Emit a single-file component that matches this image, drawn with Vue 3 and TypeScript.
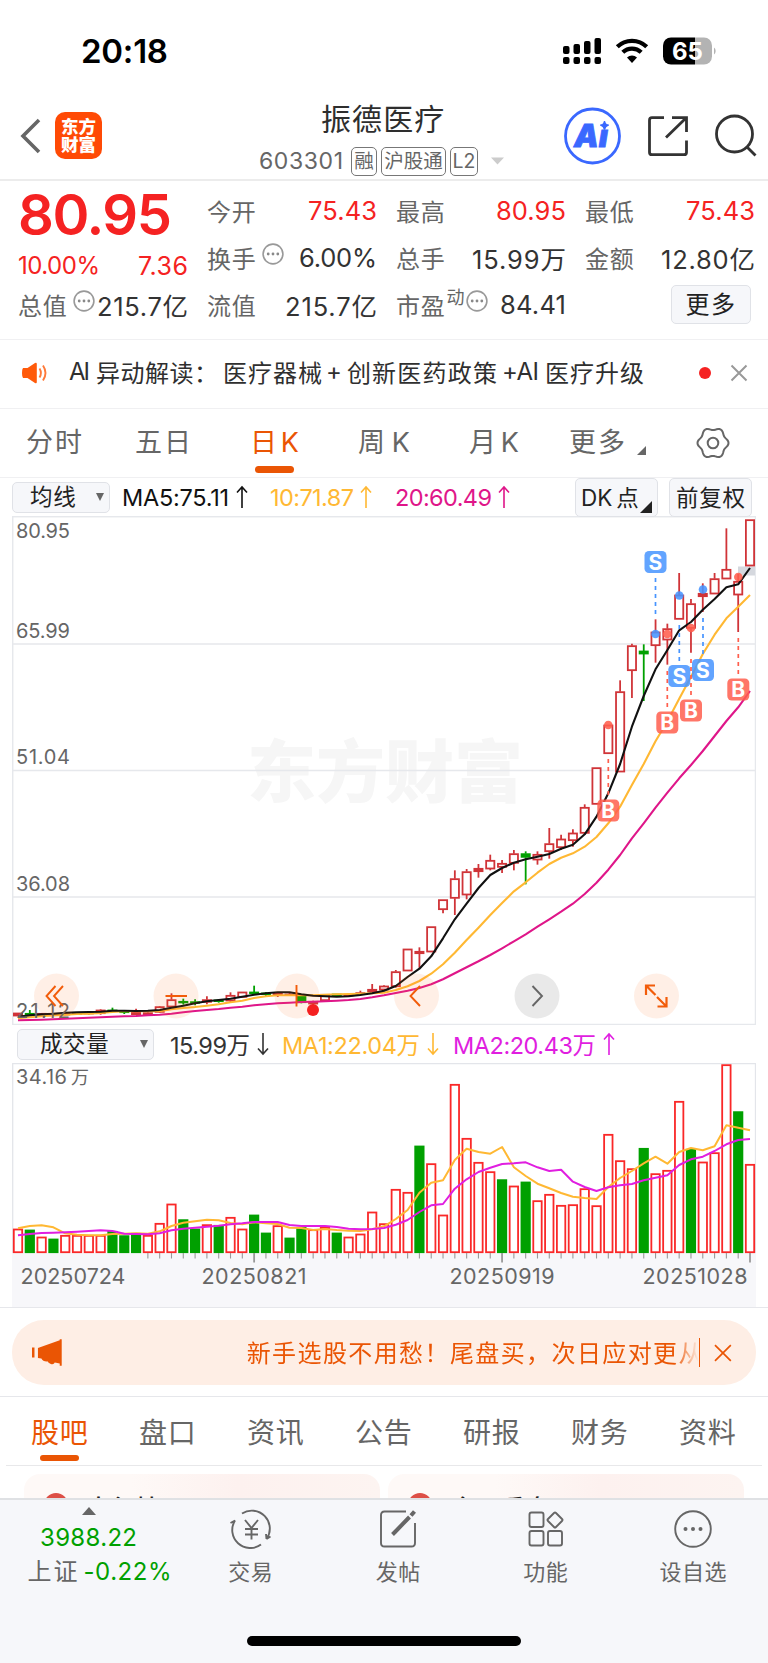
<script setup lang="ts">
import type { Directive } from 'vue'

/* Spreads a label over a given width by adjusting its letter spacing. */
const vFit: Directive<HTMLElement, number> = {
  mounted(el, { value }) {
    const n = (el.textContent ?? '').trim().length
    const natural = el.getBoundingClientRect().width
    if (n > 1) {
      const gap = (value - natural) / (n - 1)
      el.style.letterSpacing = `${gap.toFixed(3)}px`
      el.style.marginRight = `${(-gap).toFixed(3)}px`
    }
  },
}

interface Quote { label: string; value: string; w: number; red?: boolean; dots?: boolean; sup?: string }
const quotes: Quote[][] = [
  [
    { label: '今开', value: '75.43', w: 69, red: true },
    { label: '换手', value: '6.00%', w: 78, dots: true },
    { label: '流值', value: '215.7亿', w: 92 },
  ],
  [
    { label: '最高', value: '80.95', w: 70, red: true },
    { label: '总手', value: '15.99万', w: 94 },
    { label: '市盈', value: '84.41', w: 66, sup: '动', dots: true },
  ],
  [
    { label: '最低', value: '75.43', w: 69, red: true },
    { label: '金额', value: '12.80亿', w: 94 },
  ],
]

const periods = [
  { t: '分时', w: 56, cell: 109 }, { t: '五日', w: 56, cell: 115 }, { t: '日K', w: 49, cell: 108 , on: true },
  { t: '周K', w: 52, cell: 111 }, { t: '月K', w: 50, cell: 100 },
]
const sections = ['股吧', '盘口', '资讯', '公告', '研报', '财务', '资料']
const tools = ['交易', '发帖', '功能', '设自选']

/* ---- chart geometry ---- */
const STEP = 732 / 62
const cx = (i: number) => 6 + i * STEP
const from = (base: number, list: number[]) => list.map((v) => (v + base) / 3)
const line = (ys: number[]) => ys.map((y, i) => `${cx(i).toFixed(1)},${y.toFixed(1)}`).join(' ')

type Raw = [up: 0 | 1, high: number, top: number, bottom: number, low: number]
const low: Raw[] = [
  [1, 519, 519, 528, 528], [0, 510, 520, 526, 526], [1, 520, 520, 526, 526], [1, 519, 520, 527, 527],
  [1, 518, 520, 525, 525], [1, 518, 519, 523, 523], [1, 515, 517, 521, 524], [1, 508, 510, 521, 524],
  [0, 503, 510, 514, 514], [0, 511, 513, 518, 522], [1, 506, 514, 524, 524], [1, 516, 518, 524, 527],
  [1, 498, 500, 517, 519], [1, 460, 479, 501, 503], [0, 476, 484, 488, 494], [0, 478, 485, 489, 496],
  [1, 469, 479, 487, 493], [0, 478, 480, 484, 488], [1, 457, 466, 483, 486], [1, 456, 456, 472, 472],
  [0, 437, 456, 460, 461], [0, 457, 459, 463, 469], [1, 459, 460, 466, 471], [1, 459, 462, 466, 468],
  [0, 464, 466, 488, 490], [1, 482, 484, 492, 494], [1, 463, 463, 482, 482], [0, 461, 462, 466, 469],
  [1, 460, 463, 467, 469], [1, 452, 458, 463, 465], [1, 432, 448, 456, 460], [1, 436, 438, 450, 452],
]
const mid: Raw[] = [
  [1, 690, 695, 740, 743], [1, 627, 627, 693, 693], [1, 622, 634, 641, 683], [1, 560, 560, 636, 636],
  [1, 479, 479, 509, 520], [1, 391, 416, 475, 525], [1, 387, 395, 465, 478], [1, 372, 385, 395, 413],
  [1, 344, 361, 387, 391], [1, 360, 370, 382, 399], [1, 330, 341, 370, 391], [0, 334, 341, 352, 433],
  [1, 334, 343, 360, 374], [1, 264, 311, 335, 356], [1, 284, 297, 323, 330], [1, 268, 279, 302, 320],
  [1, 193, 202, 280, 284], [1, 83, 83, 193, 193],
]
const high: Raw[] = [
  [1, 645, 645, 731, 731], [1, 511, 545, 786, 786], [1, 401, 407, 482, 564], [0, 403, 423, 432, 573],
  [1, 328, 366, 407, 458], [1, 341, 356, 390, 464], [1, 189, 255, 328, 328], [1, 267, 281, 355, 428],
  [1, 220, 250, 260, 306], [1, 189, 206, 252, 252], [1, 55, 178, 207, 207], [1, 192, 214, 255, 366],
  [1, 29, 29, 168, 168],
]
const place = (base: number, rows: Raw[]) =>
  rows.map(([up, ...v]) => {
    const [h, t, b, l] = from(base, v)
    return { up: up === 1, h, t, b, l }
  })
const candles = [...place(972, low), ...place(672, mid), ...place(-18, high)]

const ma5 = line([
  ...from(972, [530, 526, 523, 521, 518, 517, 516, 515, 512, 512, 513, 512, 510, 503, 497, 490, 484, 480, 476, 470, 464, 460, 457, 457, 463, 467, 469, 470, 469, 465, 460]),
  ...from(672, [752, 738, 711, 686, 649, 595, 538, 491, 444, 405, 384, 368, 358, 350, 342, 326, 314, 283, 230]),
  ...from(-18, [850, 762, 650, 558, 478, 420, 361, 336, 299, 267, 232, 223, 174]),
])
const ma10 = line([
  ...from(972, [535, 532, 529, 526, 524, 522, 521, 519, 516, 514, 514, 514, 514, 508, 504, 501, 497, 493, 487, 482, 474, 469, 466, 466, 466, 466, 464, 463, 462, 461, 460]),
  ...from(672, [758, 750, 739, 723, 701, 673, 638, 600, 563, 525, 489, 454, 427, 398, 372, 353, 340, 320, 291]),
  ...from(-18, [940, 890, 825, 762, 694, 634, 566, 500, 432, 374, 325, 290, 255]),
])
const ma20 = line([
  ...from(972, [541, 540, 539, 538, 536, 535, 533, 532, 530, 529, 528, 526, 524, 521, 517, 513, 510, 507, 503, 500, 496, 493, 490, 488, 486, 485, 484, 482, 480, 477, 472]),
  ...from(672, [766, 759, 752, 744, 733, 718, 700, 682, 664, 645, 625, 604, 583, 560, 538, 515, 491, 462, 428, 389, 345, 295, 250, 203, 158, 115, 75]),
  ...from(-18, [723, 678, 633, 592, 543]),
])

interface Mark { k: 'S' | 'B'; x: number; y: number; d1: number; d2: number; dot: number }
const marks: Mark[] = [
  { k: 'S', x: 643.5, y: 46, d1: 62, d2: 98, dot: 118 },
  { k: 'S', x: 667.3, y: 160, d1: 109, d2: 145, dot: 79.5 },
  { k: 'S', x: 691, y: 154, d1: 102, d2: 138, dot: 73.5 },
  { k: 'B', x: 655.3, y: 206.5, d1: 155, d2: 192, dot: 118 },
  { k: 'B', x: 679, y: 194.5, d1: 143, d2: 180, dot: 112 },
  { k: 'B', x: 726.3, y: 173.5, d1: 122, d2: 160, dot: 61 },
  { k: 'B', x: 596.3, y: 294.5, d1: 243, d2: 280, dot: 209 },
]

const volTop = from(-9, [
  507, 510, 531, 537, 526, 526, 526, 526, 514, 527, 520, 526, 490, 432, 479, 507, 494, 496, 472, 507, 465, 519, 497, 534, 502, 509,
  502, 519, 531, 522, 456, 491, 388, 397, 258, 311, 465, 73, 235, 307, 335, 359, 378, 366, 422, 403, 436, 434, 386, 437, 223, 302,
  326, 265, 341, 331, 124, 268, 306, 278, 14, 155, 313,
])
const falling = [1, 3, 8, 9, 10, 14, 15, 17, 20, 21, 23, 24, 27, 34, 41, 43, 53, 57, 61]
const volMa1 = line(from(-9, [
  505, 498, 496, 502, 520, 524, 526, 526, 522, 521, 520, 521, 514, 498, 488, 484, 479, 481, 489, 493, 487, 490, 492, 503, 504, 510,
  507, 510, 512, 513, 508, 499, 477, 450, 398, 368, 361, 300, 266, 276, 281, 261, 322, 348, 371, 385, 399, 410, 414, 417, 381, 354,
  333, 310, 290, 311, 276, 264, 271, 259, 196, 203, 211,
]))
const volMa2 = line(from(-9, [
  526, 522, 519, 518, 517, 515, 513, 511, 513, 521, 522, 523, 520, 511, 506, 503, 500, 497, 493, 490, 486, 486, 486, 495, 498, 498,
  498, 501, 506, 508, 507, 504, 494, 480, 456, 436, 432, 386, 358, 336, 323, 312, 310, 307, 322, 333, 329, 365, 381, 393, 382, 376,
  372, 361, 353, 346, 315, 298, 290, 273, 253, 240, 237,
]))
const ticks = Array.from({ length: 52 }, (_, i) => i + 11)
const dates = [
  { t: '20250724', x: 8.5 }, { t: '20250821', x: 189.5 }, { t: '20250919', x: 437.5 }, { t: '20251028', x: 630.5 },
]
const prices = [
  { t: '80.95', y: 22 }, { t: '65.99', y: 122 }, { t: '51.04', y: 248 }, { t: '36.08', y: 375 }, { t: '21.12', y: 501.5 },
]

const gear = Array.from({ length: 73 }, (_, i) => {
  const a = (i * Math.PI) / 36
  const r = 14.2 + 1.3 * Math.cos(6 * a)
  return `${(17 + r * Math.cos(a)).toFixed(2)},${(17 + r * Math.sin(a)).toFixed(2)}`
}).join(' ')
</script>

<template>
  <main class="phone">
    <header class="status">
      <b v-fit="87" class="clock">20:18</b>
      <svg class="status-icons" width="160" height="32" viewBox="0 0 160 32">
        <g>
          <rect x="2" y="10" width="6.5" height="8" rx="2" /><rect x="12.5" y="8" width="6.5" height="10" rx="2" />
          <rect x="23" y="5" width="6.5" height="13" rx="2" /><rect x="33.5" y="2" width="6.5" height="16" rx="2" />
          <rect x="2" y="21" width="6.5" height="7" rx="2" /><rect x="12.5" y="21" width="6.5" height="7" rx="2" />
          <rect x="23" y="21" width="6.5" height="7" rx="2" /><rect x="33.5" y="21" width="6.5" height="7" rx="2" />
        </g>
        <g fill="none" stroke="#000" stroke-width="4.2">
          <path d="M56.3 10.8a21 21 0 0 1 29.4 0" /><path d="M61.8 16.3a13.3 13.3 0 0 1 18.4 0" />
        </g>
        <path d="M66 21.6a7.2 7.2 0 0 1 10 0L71 27z" />
        <path d="M110 1.5h24v27h-24a8 8 0 0 1-8-8v-11a8 8 0 0 1 8-8z" />
        <path d="M134 1.5h9a8 8 0 0 1 8 8v11a8 8 0 0 1-8 8h-9z" fill="#b3b3b3" />
        <path d="M153 11.5a4.5 4.5 0 0 1 0 7z" fill="#b3b3b3" />
        <text x="126.500" y="23.800" class="batt">65</text>
      </svg>
    </header>

    <nav class="head">
      <svg class="back" width="24" height="38" viewBox="0 0 24 38"><path d="M21 3 5 19l16 16" /></svg>
      <div class="logo"><span>东方</span><span>财富</span></div>
      <div class="title">
        <h1>振德医疗</h1>
        <div class="code">
          <span v-fit="84" class="num">603301</span>
          <i class="tag t1">融</i><i class="tag t2">沪股通</i><i class="tag t3">L2</i>
          <svg width="14" height="8" viewBox="0 0 14 8"><path d="M0 .5h13L6.500 7.500z" fill="#ccc" /></svg>
        </div>
      </div>
      <svg class="head-icons" width="200" height="60" viewBox="0 0 200 60">
        <circle cx="29.500" cy="30" r="27" fill="none" stroke="#3a68ff" stroke-width="2.800" />
        <text x="11" y="40.500" class="ai">Aı</text>
        <path d="M41.500 15q.8 4 4.300 4-3.500 1-4.300 4.500-.8-3.500-4.300-4.500 3.500 0 4.300-4z" fill="#3a68ff" stroke="#3a68ff" stroke-width="1.200" />
        <g fill="none" stroke="#333" stroke-width="2.800">
          <path d="M101 11.700H89q-2.500 0-2.500 2.500v32q0 2.500 2.500 2.500h32q2.500 0 2.500-2.500V34.500M109 11.700h14.500V26M122.500 12.500 103 31.500" />
          <circle cx="171.500" cy="28" r="18" /><path d="m183.500 40.500 9 9" />
        </g>
      </svg>
    </nav>

    <section class="quote">
      <div class="main">
        <b v-fit="154" class="price">80.95</b>
        <p class="pct"><span v-fit="82">10.00%</span><span v-fit="50" class="chg">7.36</span></p>
        <p class="cell"><span class="lab">总值</span><svg class="dots" width="22" height="22"><use href="#dots" /></svg><span v-fit="91" class="val">215.7亿</span></p>
      </div>
      <div v-for="(col, c) in quotes" :key="c" class="col">
        <p v-for="q in col" :key="q.label" class="cell">
          <span class="lab">{{ q.label }}</span>
          <sup v-if="q.sup">{{ q.sup }}</sup>
          <svg v-if="q.dots" class="dots" :class="{ tight: q.sup }" width="22" height="22"><use href="#dots" /></svg>
          <span v-fit="q.w" class="val" :class="{ red: q.red }">{{ q.value }}</span>
        </p>
        <button v-if="c === 2" class="more">更多</button>
      </div>
      <svg width="0" height="0" class="defs">
        <symbol id="dots" viewBox="0 0 22 22">
          <circle cx="11" cy="11" r="9.900" fill="none" stroke="#999" stroke-width="1.600" />
          <circle cx="6.200" cy="11" r="1.400" fill="#888" /><circle cx="11" cy="11" r="1.400" fill="#888" /><circle cx="15.800" cy="11" r="1.400" fill="#888" />
        </symbol>
      </svg>
    </section>

    <section class="notice">
      <svg width="26" height="22" viewBox="0 0 26 22">
        <path d="M1 6h4.500L13 1q1.800-.8 1.800 1v18q0 1.800-1.800 1L5.500 16H1q-1-1-1-5t1-5z" fill="#ff5a0a" />
        <g fill="none" stroke="#ff7a3a" stroke-width="1.900"><path d="M17.500 6.500q2.800 4.500 0 9" /><path d="M21 3.500q5 7.500 0 15" /></g>
      </svg>
      <p><span v-fit="21">AI</span><span v-fit="122" class="n1">异动解读：</span><span v-fit="99" class="n2">医疗器械</span><span class="n3">+</span><span v-fit="150" class="n4">创新医药政策</span><span v-fit="37" class="n5">+AI</span><span v-fit="99" class="n6">医疗升级</span></p>
      <i class="red-dot"></i>
      <svg width="18" height="18" viewBox="0 0 18 18"><path d="m1.500 1.500 15 15m0-15-15 15" stroke="#999" stroke-width="2" /></svg>
    </section>

    <nav class="periods">
      <span v-for="p in periods" :key="p.t" class="period" :class="{ on: p.on }" :style="{ width: p.cell + 'px' }"><span v-fit="p.w">{{ p.t }}</span></span>
      <span class="period last"><span v-fit="56">更多</span><svg width="9" height="10"><path d="M9 0v9H0z" fill="#666" /></svg></span>
      <svg width="34" height="34" viewBox="0 0 34 34"><polygon :points="gear" fill="none" stroke="#666" stroke-width="2" /><circle cx="17" cy="17" r="5.300" fill="none" stroke="#666" stroke-width="2" /></svg>
    </nav>

    <div class="legend">
      <button class="sel ma-sel">均线<i class="caret"></i></button>
      <span v-fit="107" class="m1">MA5:75.11</span><svg class="arr a1"><use href="#up" /></svg>
      <span v-fit="84" class="m2">10:71.87</span><svg class="arr a2"><use href="#up" /></svg>
      <span v-fit="97" class="m3">20:60.49</span><svg class="arr a3"><use href="#up" /></svg>
      <button class="sel dk">DK<span>点</span><svg width="12" height="12"><path d="M12 0v12H0z" fill="#222" /></svg></button>
      <button class="sel fq">前复权</button>
      <svg width="0" height="0" class="defs">
        <symbol id="up" viewBox="0 0 12 24"><path d="M6 23V2M1 7.500 6 2l5 5.500" fill="none" stroke="currentColor" stroke-width="1.600" /></symbol>
        <symbol id="down" viewBox="0 0 12 24"><path d="M6 1v21M1 16.500 6 22l5-5.500" fill="none" stroke="currentColor" stroke-width="1.600" /></symbol>
      </svg>
    </div>

    <svg class="kline" width="744" height="509" viewBox="0 0 744 509">
      <text x="235" y="280.500" class="wm" textLength="276" lengthAdjust="spacingAndGlyphs">东方财富</text>
      <g stroke="#e6e8ec" stroke-width="1.500" fill="none">
        <rect x=".7" y=".7" width="742.800" height="507.800" /><path d="M0 128h744M0 254.500h744M0 381h744" />
      </g>
      <rect x="726" y="50.500" width="17" height="9" fill="#d5d8de" />
      <g v-for="(k, i) in candles" :key="i" :stroke="k.up ? '#d03438' : '#00a000'" :fill="k.up ? (k.b - k.t > 3.5 ? '#fff' : '#d03438') : '#00a000'" stroke-width="1.800">
        <path v-if="k.t - k.h > 0.4" :d="`M${cx(i)} ${k.h}V${k.t}`" />
        <path v-if="k.l - k.b > 0.4" :d="`M${cx(i)} ${k.b}V${k.l}`" />
        <rect :x="cx(i) - 4.100" :y="k.t + 0.500" width="8.200" :height="Math.max(k.b - k.t - 1, 0.600)" />
      </g>
      <g fill="none" stroke-width="2.100" stroke-linejoin="round">
        <polyline :points="ma20" stroke="#df1689" /><polyline :points="ma10" stroke="#ffb833" /><polyline :points="ma5" stroke="#111" />
      </g>
      <g v-for="(m, i) in marks" :key="'m' + i" :fill="m.k === 'S' ? '#4794ff' : '#ff5e4d'">
        <circle :cx="m.x" :cy="m.dot" r="4.300" opacity=".88" />
        <path :d="`M${m.x} ${m.d1}V${m.d2}`" :stroke="m.k === 'S' ? '#4794ff' : '#ff5e4d'" stroke-width="1.700" stroke-dasharray="4 4" />
        <rect :x="m.x - 11" :y="m.y - 11" width="22" height="22" rx="4.500" opacity=".85" />
        <text :x="m.x" :y="m.y + 7.700" class="mark">{{ m.k }}</text>
      </g>
      <g class="axis"><text v-for="p in prices" :key="p.t" x="4" :y="p.y" textLength="54">{{ p.t }}</text></g>
      <g fill="#ff6a1f" fill-opacity=".11">
        <circle cx="44.500" cy="480" r="22.500" /><circle cx="164" cy="480" r="22.500" /><circle cx="285" cy="480" r="22.500" />
        <circle cx="404.500" cy="480" r="22.500" /><circle cx="644.500" cy="480" r="22.500" />
      </g>
      <circle cx="525" cy="480" r="22.500" fill="#000" fill-opacity=".085" />
      <g fill="none" stroke="#f25c0a" stroke-width="1.900">
        <path d="m43.500 470-9 10 9 10M51 470l-9 10 9 10M153.500 480H175M284.500 469v21.500M408 470l-9.500 10 9.500 10" />
        <path d="M643 469.500h-9v9.500M634.500 470l9 9M645.500 490.500h9v-9.500M654 490l-9-9" stroke-width="2.200" />
      </g>
      <path d="m520.500 470 9.500 10-9.500 10" fill="none" stroke="#666" stroke-width="1.900" />
      <circle cx="301" cy="494" r="6" fill="#f42020" />
    </svg>

    <div class="legend vol-legend">
      <button class="sel vol-sel">成交量<i class="caret"></i></button>
      <span v-fit="80" class="v1">15.99万</span><svg class="arr"><use href="#down" /></svg>
      <span v-fit="138" class="v2">MA1:22.04万</span><svg class="arr"><use href="#down" /></svg>
      <span v-fit="143" class="v3">MA2:20.43万</span><svg class="arr"><use href="#up" /></svg>
    </div>

    <svg class="vol" width="744" height="244" viewBox="0 0 744 244">
      <rect x="0" y="190" width="744" height="54" fill="#f7f7fa" />
      <path d="M.7 190V.7h742.800V190" fill="none" stroke="#e3e5ea" stroke-width="1.300" />
      <g class="axis"><text x="4" y="20.500" textLength="51">34.16</text><text x="59" y="20.500" class="cjk">万</text></g>
      <g v-for="(t, i) in volTop" :key="i" :fill="falling.includes(i) ? '#00a000' : '#fff'" :stroke="falling.includes(i) ? '#00a000' : '#fa2828'" stroke-width="1.800">
        <rect :x="cx(i) - 4.200" :y="t + 0.500" width="8.400" :height="188.700 - t" />
      </g>
      <g fill="none" stroke-width="2" stroke-linejoin="round"><polyline :points="volMa1" stroke="#ffb833" /><polyline :points="volMa2" stroke="#e01ee0" /></g>
      <path v-for="i in ticks" :key="'t' + i" :d="`M${cx(i)} 190v${(i - 20) % 21 ? 5.500 : 9.500}`" stroke="#999" :stroke-width="(i - 20) % 21 ? 1.1 : 1.800" />
      <g class="axis date"><text v-for="d in dates" :key="d.t" :x="d.x" y="221" textLength="105">{{ d.t }}</text></g>
    </svg>

    <section class="promo">
      <div class="pill">
        <svg class="horn" width="32" height="28" viewBox="0 0 32 28"><path d="M0 8.500h2.500v10H0zM6 9 28 1V0h2v27h-2v-2.500l-5-1q-1 2.500-4 1.500t-3-2.500q-5 .5-6.500-3L6 19z" fill="#ea5504" /></svg>
        <p class="tip"><span>新手选股不用愁！尾盘买，次日应对更从容</span></p>
        <i class="bar"></i>
        <svg width="18" height="18" viewBox="0 0 18 18"><path d="m1 1 16 16M17 1 1 17" stroke="#ea5504" stroke-width="1.700" /></svg>
      </div>
    </section>

    <nav class="sections"><span v-for="(s, i) in sections" :key="s" :class="{ on: i === 0 }">{{ s }}</span></nav>

    <section class="cards">
      <article><i></i><b>大行情</b></article>
      <article class="second"><i></i><b>今日看盘</b></article>
    </section>

    <footer class="dock">
      <div class="index">
        <svg width="14" height="8" viewBox="0 0 14 8"><path d="M0 8 7 0l7 8z" fill="#666" /></svg>
        <strong v-fit="97">3988.22</strong>
        <p><span v-fit="50">上证</span><em v-fit="88">-0.22%</em></p>
      </div>
      <div v-for="(t, i) in tools" :key="t" class="tool">
        <svg width="44" height="40" viewBox="0 0 44 40" fill="none" stroke="#666" stroke-width="1.900">
          <template v-if="i === 0">
            <path d="M13 4.500a18 18 0 0 1 24.500 25.500l4-2.500M32 35.500A18 18 0 0 1 6 11.500l-4.500 2.500M37.500 30l-.5-5" />
            <path d="m16 11 6.500 8 6.500-8M16 20h13M16 25.500h13M22.500 19v11.500" />
          </template>
          <template v-else-if="i === 1">
            <path d="M30 2.500H8.500Q5 2.500 5 6v28q0 3.500 3.500 3.500h27Q39 37.500 39 34V14" />
            <path d="M38.500 2.500 35 6.500M33.500 8 19 23l-2.500 2.500" stroke-width="4" />
          </template>
          <template v-else-if="i === 2">
            <rect x="5.500" y="3.500" width="14" height="14.500" rx="2" /><rect x="5.500" y="22" width="14" height="14.500" rx="2" /><rect x="24" y="22" width="14" height="14.500" rx="2" />
            <path d="M30 4q1-1 2 0l6 6q1 1 0 2l-6 6q-1 1-2 0l-6-6q-1-1 0-2z" />
          </template>
          <template v-else>
            <circle cx="22" cy="20" r="17.800" />
            <g fill="#666" stroke="none"><circle cx="14.500" cy="20" r="2" /><circle cx="22" cy="20" r="2" /><circle cx="29.500" cy="20" r="2" /></g>
          </template>
        </svg>
        <span>{{ t }}</span>
      </div>
      <i class="home"></i>
    </footer>
  </main>
</template>

<style>
body { margin: 0; background: #fff; }
</style>

<style scoped>
.phone { width: 768px; height: 1663px; overflow: hidden; background: #fff; color: #333; font-family: Inter, "Noto Sans CJK SC", sans-serif; font-size: 24px; display: flex; flex-direction: column; }
.phone * { box-sizing: border-box; }
.phone > * { flex: none; }
p, h1 { margin: 0; font-weight: 400; }
i, em { font-style: normal; }
span, b, strong, em { white-space: nowrap; }
button { font: inherit; color: #222; padding: 0; background: #f6f7fa; border: 1.500px solid #e0e2e7; border-radius: 5px; }
.defs { position: absolute; }

.status { height: 100px; display: flex; justify-content: space-between; padding: 31px 47px 0 81px; }
.clock { font-size: 33px; line-height: 41px; font-weight: 600; color: #000; height: 41px; }
.status-icons { margin-top: 5px; }
.batt { font: 700 24px Inter; fill: #fff; text-anchor: middle; }

.head { height: 81px; border-bottom: 2px solid #ececec; display: flex; align-items: flex-start; }
.head > * { flex: none; }
.back { margin: 17px 0 0 18px; fill: none; stroke: #666; stroke-width: 3.600; }
.logo { width: 47px; height: 47px; margin: 12px 0 0 13px; border-radius: 10px; background: #ff4a05; color: #fff; font: 900 17.500px/18px "Noto Sans CJK SC"; display: flex; flex-direction: column; align-items: center; justify-content: center; padding-bottom: 1px; }
.title { width: 275px; margin-left: 157px; }
h1 { font-size: 30px; line-height: 38px; letter-spacing: 1.100px; margin-left: 62px; color: #2e2e2e; }
.code { display: flex; align-items: center; height: 34px; margin-top: 6px; color: #666; }
.num { font-size: 23px; }
.tag { border: 1.500px solid #777; border-radius: 5px; height: 29px; line-height: 26px; font-size: 19.500px; text-align: center; }
.t1 { width: 26px; margin-left: 8px; }
.t2 { width: 65px; margin-left: 4px; }
.t3 { width: 28px; margin: 0 13px 0 4px; }
.head-icons { margin: 6px 0 0 29px; }
.ai { font: italic 900 31px Inter; fill: #3a68ff; stroke: #3a68ff; stroke-width: .8px; }

.quote { height: 159px; border-bottom: 1.500px solid #f0f0f2; display: grid; grid-template-columns: repeat(4, 170px); column-gap: 19px; padding: 6px 0 0 18px; }
.main, .col { display: flex; flex-direction: column; position: relative; }
.price { font-size: 56px; line-height: 57px; height: 56px; font-weight: 600; color: #f52222; align-self: flex-start; }
.pct { display: flex; justify-content: space-between; height: 38px; line-height: 45px; color: #f52222; font-size: 24px; }
.chg { font-size: 25px; line-height: 47px; }
.cell { height: 47px; display: flex; align-items: center; }
.lab { color: #666; font-size: 24px; letter-spacing: .8px; }
.val { margin-left: auto; font-size: 25.500px; color: #333; }
.val.red { color: #f52222; }
.dots { margin: -8px 0 0 5px; }
.dots.tight { margin-left: 1px; }
.main .dots + .val { margin-left: auto; }
sup { font-size: 18px; line-height: 20px; margin: -14px 0 0 1px; color: #666; }
.more { width: 80px; height: 39px; margin: 4px 0 0 86px; letter-spacing: 1.500px; font-size: 24px; line-height: 35px; }

.notice { height: 69px; border-bottom: 1.500px solid #f0f0f2; display: flex; align-items: center; padding: 0 20px 2px 22px; }
.notice p { display: flex; align-items: center; margin: -4px 0 0 21px; width: 630px; font-size: 24px; color: #2f2f2f; }
.n1 { margin-left: 6px; } .n2 { margin-left: 5px; } .n3 { margin: 0 2px 0 4px; } .n4 { margin-left: 3px; } .n5 { margin-left: 5px; } .n6 { margin-left: 6px; }
.red-dot { width: 12px; height: 12px; border-radius: 6px; background: #f52222; margin-right: 19px; }

.periods { height: 69px; border-bottom: 1.500px solid #f0f0f2; display: flex; align-items: center; padding: 0 0 1px 26px; font-size: 27px; color: #666; }
.period { position: relative; line-height: 40px; flex: none; }
.last { width: 127px; display: flex; align-items: center; }
.last svg { margin: 17px 0 0 12px; }
.on { color: #ea5504; }
.period.on::after { content: ""; position: absolute; left: 4.500px; bottom: -10px; width: 39px; height: 6.500px; border-radius: 4px; background: #ea5504; }

.legend { height: 38px; display: flex; align-items: center; padding-left: 12px; position: relative; font-size: 23.500px; }
.sel { position: relative; height: 31px; line-height: 28px; font-size: 22.500px; text-align: left; padding-left: 17px; }
.ma-sel { width: 98px; margin-right: 12px; letter-spacing: .8px; }
.caret { position: absolute; right: 5px; top: 10px; border: 4.500px solid transparent; border-top: 8px solid #666; border-bottom: 0; }
.arr { width: 12px; height: 24px; flex: none; }
.m1, .a1 { color: #111; } .a1 { margin: 0 22px 0 7px; }
.m2, .a2 { color: #ffb833; } .a2 { margin: 0 23px 0 6px; }
.m3, .a3 { color: #df1689; } .a3 { margin: 0 0 0 6px; }
.dk { margin-left: auto; width: 83px; height: 39px; line-height: 37px; padding-left: 5px; }
.dk span { margin-left: 4px; }
.dk svg { position: absolute; right: 5px; bottom: 3px; }
.fq { width: 83px; height: 39px; line-height: 37px; padding-left: 6px; margin: 0 16px 0 11px; letter-spacing: .7px; }
.kline, .vol { display: block; margin-left: 12px; }
.kline { overflow: hidden; }
.axis { font: 20px Inter; fill: #666; }
.axis .cjk { font: 18px "Noto Sans CJK SC"; }
.date { font-size: 21.500px; }
.wm { font: 900 68px "Noto Sans CJK SC"; fill: #f6f6f6; }
.mark { font: 700 21px Inter; fill: #fff; text-anchor: middle; }

.vol-legend { height: 38px; padding-left: 17px; font-size: 23.500px; }
.vol-legend > span { margin-top: -1px; }
.vol-sel { width: 137px; padding-left: 22px; margin-right: 16px; letter-spacing: .6px; }
.v1 + .arr { margin: 0 13px 0 7px; }
.v2, .v2 + .arr { color: #ffb833; } .v2 + .arr { margin: 0 14px 0 7px; }
.v3, .v3 + .arr { color: #e01ee0; } .v3 + .arr { margin-left: 7px; }

.promo { height: 90px; border-top: 1.500px solid #e6e7eb; border-bottom: 1.500px solid #e6e7eb; padding: 12px 12px 0; }
.pill { height: 65px; border-radius: 32px; background: #feeee5; display: flex; align-items: center; padding: 0 24px 0 20px; color: #ea5504; }
.horn { margin: 0; }
.tip { width: 454px; margin: -2px 0 0 183px; overflow: hidden; letter-spacing: 1.400px; -webkit-mask-image: linear-gradient(90deg, #000 94%, transparent 99.500%); mask-image: linear-gradient(90deg, #000 94%, transparent 99.500%); }
.bar { width: 1.500px; height: 29px; background: #ea5504; margin: 0 14px 0 -2px; }
.tip, .bar { flex: none; }

.sections { height: 69px; display: flex; margin: 0 6px; padding: 17px 0 0 25px; border-bottom: 1.500px solid #e8e8ea; color: #666; font-size: 28px; line-height: 38px; }
.sections span { width: 108px; flex: none; position: relative; letter-spacing: .8px; }
.sections .on::after { content: ""; position: absolute; left: 9px; bottom: 4px; width: 39px; height: 6.500px; border-radius: 4px; background: #ea5504; }

.cards { height: 32px; overflow: hidden; display: flex; gap: 8px; padding: 8px 24px 0; }
article { width: 356px; height: 70px; border-radius: 16px; background: linear-gradient(90deg, #fef9f7 30%, #fdf1ef 60%, #fdf4f1); display: flex; padding: 19px 0 0 20px; }
article i { width: 24px; height: 24px; border-radius: 12px; background: #dd4f46; flex: none; }
article b { font-size: 25px; line-height: 30px; margin: 1px 0 0 18px; color: #222; font-weight: 500; }

.dock { flex: 1 0 0 !important; background: #f6f7fa; border-top: 2px solid #dfe1e4; display: flex; position: relative; }
.index { width: 177px; display: flex; flex-direction: column; align-items: center; padding-top: 7px; font-size: 24px; }
.index strong { font-weight: 400; color: #00a000; line-height: 30px; margin-top: 8px; }
.index svg { flex: none; }
.index p { line-height: 36px; color: #666; display: flex; margin: 1px 0 0 22px; }
.index em { color: #00a000; margin-left: 6px; }
.tool { width: 147.500px; display: flex; flex-direction: column; align-items: center; padding-top: 9px; font-size: 22px; color: #666; }
.tool span { line-height: 36px; margin-top: 5px; letter-spacing: .5px; }
.home { position: absolute; left: 247px; bottom: 17px; width: 274px; height: 10px; border-radius: 5px; background: #000; }
</style>
